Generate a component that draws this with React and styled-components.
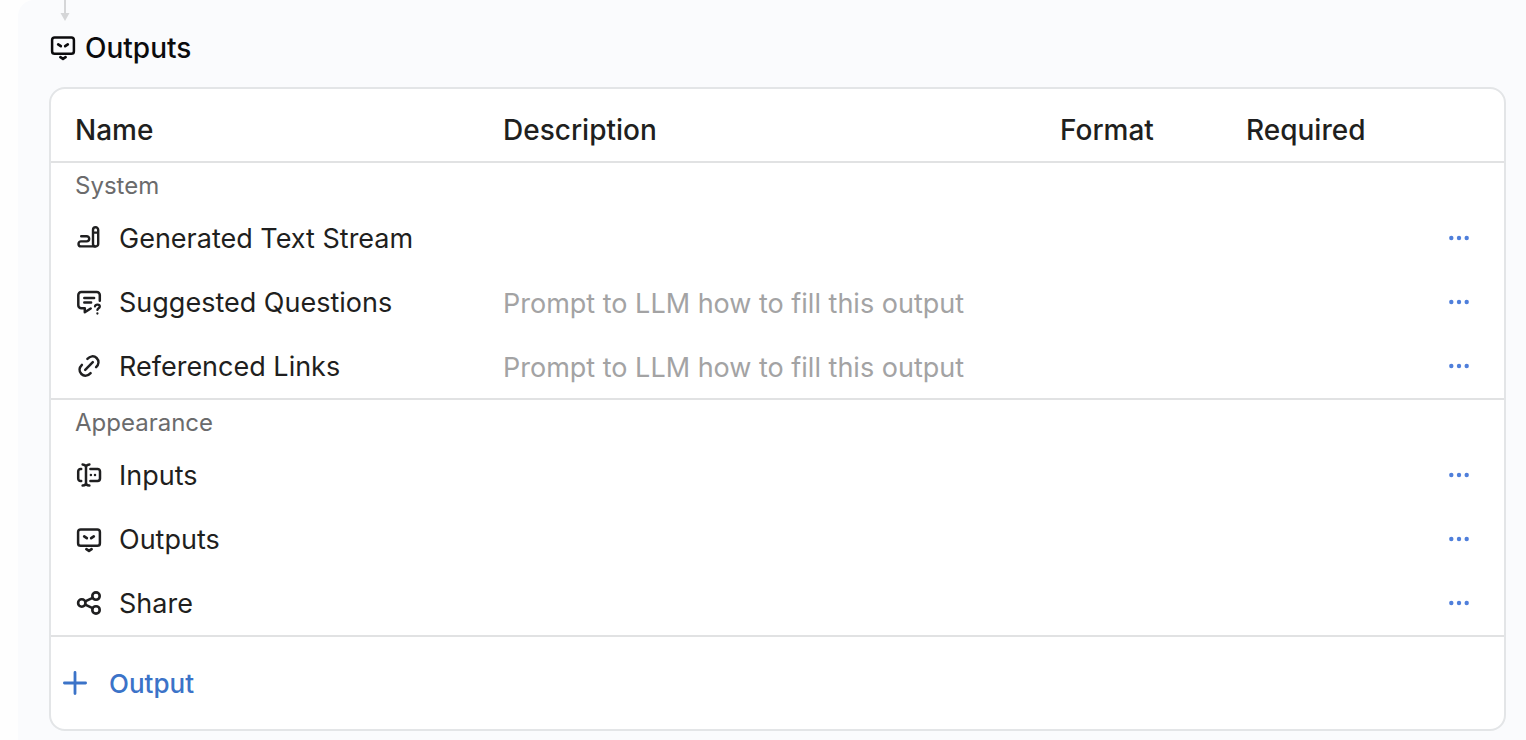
import React from "react";
import styled, { createGlobalStyle } from "styled-components";

const GlobalStyle = createGlobalStyle`
  * {
    box-sizing: border-box;
  }
  body {
    margin: 0;
    background: #fefefe;
    color: #1f1f20;
    font-family: Inter, "Liberation Sans", sans-serif;
  }
`;

const Page = styled.main`
  padding-left: 18px;
`;

const Panel = styled.section`
  min-height: 100vh;
  padding: 0 20px 9px 31px;
  background: #fafbfd;
  border-radius: 16px 0 0 0;
`;

const Connector = styled.svg`
  display: block;
  margin-left: 8px;
`;

const PanelTitle = styled.h2`
  display: flex;
  align-items: center;
  gap: 8px;
  height: 36px;
  margin: 8px 0 22px;
  color: #0b0b0d;
  font-size: 28px;
  font-weight: 500;
  line-height: 36px;
`;

const Card = styled.div`
  background: #fff;
  border: 2px solid #e3e5e7;
  border-radius: 16px;
`;

const Table = styled.table`
  width: 100%;
  table-layout: fixed;
  border-collapse: separate;
  border-spacing: 0;
`;

const Col = styled.col`
  width: ${({ $width }) => ($width ? `${$width}px` : "auto")};
`;

const HeadCell = styled.th`
  height: 74px;
  padding: 10px 0 0 24px;
  border-bottom: 2px solid #e1e2e3;
  font-size: 28px;
  font-weight: 500;
  line-height: 36px;
  text-align: left;
`;

const Group = styled.tbody`
  tr:last-child td {
    height: 66px;
    border-bottom: 2px solid #e1e2e3;
  }
`;

const GroupLabel = styled.th`
  height: 43px;
  padding: 2px 0 0 24px;
  color: #6b6b6c;
  font-size: 24px;
  font-weight: 400;
  line-height: 32px;
  text-align: left;
`;

const Cell = styled.td`
  height: 64px;
  padding: 0 0 0 24px;
  font-size: 27px;
  line-height: 36px;
`;

const NameWrap = styled.div`
  display: flex;
  align-items: center;
  gap: 16px;
`;

const ItemText = styled.span`
  padding-top: 2px;
`;

const MenuCell = styled(Cell)`
  padding: 0;
  text-align: center;
`;

const DescriptionInput = styled.input`
  display: block;
  width: 100%;
  height: 38px;
  padding: 2px 0 0;
  border: 0;
  outline: 0;
  background: transparent;
  color: inherit;
  font: inherit;
  &::placeholder {
    color: #a3a3a4;
    opacity: 1;
  }
`;

const MenuButton = styled.button`
  display: inline-flex;
  align-items: center;
  justify-content: center;
  width: 40px;
  height: 40px;
  padding: 0;
  border: 0;
  background: none;
  color: #4f7fdb;
  cursor: pointer;
  vertical-align: middle;
`;

const Footer = styled.div`
  display: flex;
  align-items: center;
  height: 92px;
  padding: 0 10px;
`;

const AddButton = styled.button`
  display: flex;
  align-items: center;
  gap: 20px;
  padding: 0;
  border: 0;
  background: none;
  color: #3b73c8;
  font-family: inherit;
  font-size: 26px;
  font-weight: 500;
  line-height: 36px;
  cursor: pointer;
`;

const IconSvg = styled.svg`
  display: block;
  flex: none;
  width: 28px;
  height: 28px;
  fill: none;
  stroke: currentColor;
  stroke-width: ${({ $stroke }) => $stroke || 2.5};
  stroke-linecap: round;
  stroke-linejoin: round;
`;

const OutputsIcon = () => (
  <IconSvg viewBox="0 0 28 28" aria-hidden="true">
    <rect x="3.1" y="4.4" width="21.8" height="16.4" rx="2.6" />
    <path d="M9.2 11.4l2.6 1.8M18.8 11.4l-2.6 1.8M11.4 24.2l2.6 1.7 2.6-1.7" strokeWidth="2.7" />
  </IconSvg>
);

const StreamIcon = () => (
  <IconSvg viewBox="0 0 28 28" $stroke={2.4} aria-hidden="true">
    <path d="M6.2 12.2h5.4a2.6 2.6 0 0 1 0 5.2H6a2.5 2.5 0 0 0 0 5H19.5" />
    <path d="M18 8.6V5.9a2.6 2.6 0 0 1 5.2 0v14a2.6 2.6 0 0 1-5.2 0V8.6h5.2" />
  </IconSvg>
);

const QuestionsIcon = () => (
  <IconSvg viewBox="0 0 28 28" aria-hidden="true">
    <path d="M24.8 12.8V7a3 3 0 0 0-3-3H6.3a3 3 0 0 0-3 3v10.3a3 3 0 0 0 3 3H9.8v4l5.9-3.8" />
    <path d="M9.3 10.1h9.8M9.3 14.4h6.8" />
    <path d="M20 18.4c.4-2.5 4.8-2.3 4.8.1 0 1.7-2.2 1.7-2.4 3.3M22.4 25.5v.1" strokeWidth="2.3" />
  </IconSvg>
);

const LinkIcon = () => (
  <IconSvg viewBox="0 0 28 28" aria-hidden="true">
    <path d="M12.4 6.8C15 4.1 18.8 3.3 21.6 6c2.8 2.8 2.2 6.4-.5 9.1" />
    <path d="M15.6 21.2c-2.6 2.7-6.4 3.5-9.2.8-2.8-2.8-2.2-6.4.5-9.1" />
    <path d="M10.2 17.8l7.6-7.6" />
  </IconSvg>
);

const InputsIcon = () => (
  <IconSvg viewBox="0 0 28 28" aria-hidden="true">
    <path d="M6.2 8H5.6a2.4 2.4 0 0 0-2.4 2.4v7.2A2.4 2.4 0 0 0 5.6 20h.6" />
    <path d="M15.4 8h7.2A2.4 2.4 0 0 1 25 10.4v7.2a2.4 2.4 0 0 1-2.4 2.4h-7.2" />
    <path d="M7.6 3.4c2 .2 3.4 1 3.4 2.7v15.8c0 1.7-1.4 2.5-3.4 2.7M14.4 3.4c-2 .2-3.4 1-3.4 2.7M11 21.9c0 1.7 1.4 2.5 3.4 2.7" />
    <path d="M15.9 14v.1M20 14v.1" />
  </IconSvg>
);

const ShareIcon = () => (
  <IconSvg viewBox="0 0 28 28" $stroke={2.6} aria-hidden="true">
    <circle cx="6.8" cy="14" r="3.7" />
    <circle cx="21" cy="7.1" r="3.7" />
    <circle cx="21" cy="20.9" r="3.7" />
    <path d="M10.2 12.4l7.4-3.5M10.2 15.6l7.4 3.5" />
  </IconSvg>
);

const PlusIcon = () => (
  <IconSvg viewBox="0 0 28 28" $stroke={2.8} aria-hidden="true">
    <path d="M14 3.4v21.2M3.4 14h21.2" />
  </IconSvg>
);

const groups = [
  {
    label: "System",
    rows: [
      { name: "Generated Text Stream", icon: StreamIcon },
      { name: "Suggested Questions", icon: QuestionsIcon, editable: true },
      { name: "Referenced Links", icon: LinkIcon, editable: true },
    ],
  },
  {
    label: "Appearance",
    rows: [
      { name: "Inputs", icon: InputsIcon },
      { name: "Outputs", icon: OutputsIcon },
      { name: "Share", icon: ShareIcon },
    ],
  },
];

const OutputRow = ({ name, icon: Icon, editable }) => (
  <tr>
    <Cell>
      <NameWrap>
        <Icon />
        <ItemText>{name}</ItemText>
      </NameWrap>
    </Cell>
    <Cell>
      {editable && (
        <DescriptionInput
          type="text"
          aria-label={`${name} description`}
          placeholder="Prompt to LLM how to fill this output"
        />
      )}
    </Cell>
    <Cell />
    <Cell />
    <MenuCell>
      <MenuButton type="button" aria-label={`${name} options`}>
        <svg width="22" height="6" viewBox="0 0 22 6" fill="currentColor">
          <circle cx="3.3" cy="3" r="2.2" />
          <circle cx="11" cy="3" r="2.2" />
          <circle cx="18.7" cy="3" r="2.2" />
        </svg>
      </MenuButton>
    </MenuCell>
  </tr>
);

const App = () => (
  <>
    <GlobalStyle />
    <Page>
      <Panel>
        <Connector width="16" height="21" viewBox="0 0 16 21" aria-hidden="true">
          <path d="M8 0v14" stroke="#d5d6d8" strokeWidth="2" />
          <path d="M3.5 13h9L8 21z" fill="#d5d6d8" />
        </Connector>
        <PanelTitle>
          <OutputsIcon />
          <ItemText>Outputs</ItemText>
        </PanelTitle>
        <Card>
          <Table>
            <colgroup>
              <Col $width={428} />
              <Col />
              <Col $width={186} />
              <Col $width={192} />
              <Col $width={90} />
            </colgroup>
            <thead>
              <tr>
                <HeadCell scope="col">Name</HeadCell>
                <HeadCell scope="col">Description</HeadCell>
                <HeadCell scope="col">Format</HeadCell>
                <HeadCell scope="col">Required</HeadCell>
                <HeadCell as="td" />
              </tr>
            </thead>
            {groups.map(group => (
              <Group key={group.label}>
                <tr>
                  <GroupLabel colSpan={5} scope="rowgroup">
                    {group.label}
                  </GroupLabel>
                </tr>
                {group.rows.map(row => (
                  <OutputRow key={row.name} {...row} />
                ))}
              </Group>
            ))}
          </Table>
          <Footer>
            <AddButton type="button">
              <PlusIcon />
              <ItemText>Output</ItemText>
            </AddButton>
          </Footer>
        </Card>
      </Panel>
    </Page>
  </>
);

export default App;
